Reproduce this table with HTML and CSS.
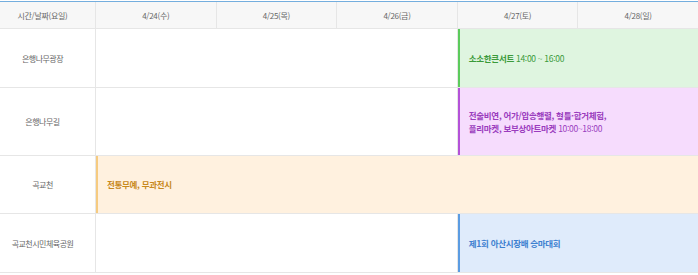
FILE: index.html
```html
<!DOCTYPE html>
<html lang="ko">
<head>
<meta charset="utf-8">
<title>일정표</title>
<link rel="stylesheet" href="styles.css">
</head>
<body>
<div class="schedule">
  <div class="head first">시간/날짜(요일)</div>
  <div class="head">4/24(수)</div>
  <div class="head">4/25(목)</div>
  <div class="head">4/26(금)</div>
  <div class="head">4/27(토)</div>
  <div class="head">4/28(일)</div>

  <div class="place">은행나무광장</div>
  <div class="empty span3"></div>
  <div class="event green span2"><p><b>소소한콘서트</b> 14:00 ~ 16:00</p></div>

  <div class="place">은행나무길</div>
  <div class="empty span3"></div>
  <div class="event purple span2"><p><b>전술비연, 어가/압송행렬, 형틀·합거체험,<br>플리마켓, 보부상아트마켓</b> 10:00~18:00</p></div>

  <div class="place">곡교천</div>
  <div class="event orange span5"><p><b>전통무예, 무과전시</b></p></div>

  <div class="place">곡교천시민체육공원</div>
  <div class="empty span3"></div>
  <div class="event blue span2"><p><b>제1회 아산시장배 승마대회</b></p></div>
</div>
</body>
</html>
```

FILE: styles.css
```css
html, body {
  margin: 0;
  padding: 0;
  background: #fff;
}
body {
  font-family: "Noto Sans CJK KR", "Noto Sans", sans-serif;
  font-size: 8px;
  color: #666;
}
.schedule {
  margin-top: 1px;
  display: grid;
  grid-template-columns: 95px repeat(5, 1fr);
  grid-template-rows: 26px 58px 67px 57px 58px;
  gap: 1px;
  background: #e6e6e6;
  border-top: 1px solid #74aede;
  border-bottom: 1px solid #e6e6e6;
}
.head {
  background: #f7f7f7;
  display: flex;
  align-items: center;
  justify-content: center;
  color: #666;
  letter-spacing: -0.3px;
}
.head.first {
  padding-right: 10px;
}
.place {
  background: #fff;
  display: flex;
  align-items: center;
  justify-content: center;
  padding-right: 10px;
  color: #666;
  letter-spacing: -0.5px;
}
.empty {
  background: #fff;
}
.span2 { grid-column: span 2; }
.span3 { grid-column: span 3; }
.span5 { grid-column: span 5; }
.event {
  display: flex;
  align-items: center;
  padding-left: 9px;
  border-left: 2px solid;
  font-size: 8.5px;
  letter-spacing: -0.3px;
}
.event p {
  margin: 0;
  line-height: 12.4px;
}
.event b {
  font-weight: 700;
}
.green {
  background: #dff5e0;
  border-left-color: #5ccb5c;
  color: #3a9a3a;
}
.purple {
  background: #f6dcfd;
  border-left-color: #b452d8;
  color: #9a3cbd;
}
.orange {
  background: #fff1df;
  border-left-color: #f6cb80;
  color: #c8891c;
}
.blue {
  background: #dfebfb;
  border-left-color: #5b9ce2;
  color: #3d80d0;
}
```
